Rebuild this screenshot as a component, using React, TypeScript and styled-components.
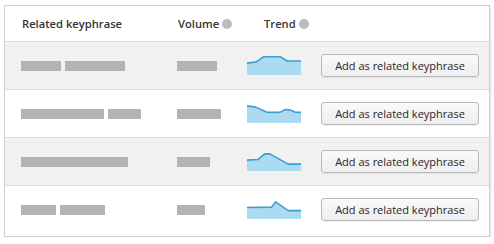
import React from 'react';
import styled, { createGlobalStyle } from 'styled-components';

const GlobalStyle = createGlobalStyle`
  body {
    margin: 0;
    background: #ffffff;
    font-family: 'Open Sans', 'Noto Sans', sans-serif;
  }
`;

const Card = styled.div`
  margin: 5px 0 0 4px;
  width: 486px;
  box-sizing: border-box;
  border: 1px solid #cfcfcf;
  box-shadow: 1px 1px 2px rgba(0, 0, 0, 0.12);
  background: #fff;
  padding-bottom: 3px;
`;

const Row = styled.div<{ shaded?: boolean; last?: boolean }>`
  display: grid;
  grid-template-columns: 156px 70px 74px 158px;
  align-items: center;
  padding-left: 16px;
  height: 47px;
  background: ${({ shaded }) => (shaded ? '#f1f1f1' : '#fff')};
  border-bottom: ${({ last }) => (last ? 'none' : '1px solid #dcdcdc')};
`;

const HeaderRow = styled(Row)`
  height: 35px;
`;

const HeaderCell = styled.div<{ indent?: number }>`
  display: flex;
  align-items: center;
  gap: 3px;
  font-size: 11.2px;
  font-weight: 600;
  color: #333;
  padding-left: ${({ indent }) => indent ?? 1}px;
`;

const HelpDot = styled.span`
  display: inline-block;
  width: 10px;
  height: 10px;
  border-radius: 50%;
  background: #bcbcbc;
`;

const Bars = styled.div`
  display: flex;
  gap: 4px;
`;

const Bar = styled.span<{ w: number }>`
  display: block;
  width: ${({ w }) => w}px;
  height: 10px;
  background: #b3b3b3;
`;

const Spark = styled.svg`
  display: block;
  width: 54px;
  height: 19px;
`;

const AddButton = styled.button`
  width: 158px;
  height: 23px;
  box-sizing: border-box;
  border: 1px solid #b9b9b9;
  border-radius: 3px;
  background: linear-gradient(#f9f9f9, #efefef);
  box-shadow: 0 1px 0 rgba(0, 0, 0, 0.05);
  font-family: 'Open Sans', 'Noto Sans', sans-serif;
  font-size: 11px;
  color: #262626;
  padding: 0;
  cursor: pointer;
`;

interface Item {
  words: number[];
  volume: number;
  trend: string;
}

const items: Item[] = [
  { words: [40, 60], volume: 40, trend: '22,57 50,53 72,36 120,36 142,50 183,50' },
  { words: [83, 33], volume: 44, trend: '22,40 48,44 80,60 120,61 135,52 150,53 165,60 183,61' },
  { words: [107], volume: 33, trend: '22,60 55,58 75,40 90,40 145,73 183,73' },
  { words: [35, 45], volume: 28, trend: '22,58 95,57 107,40 145,68 183,68' },
];

const Sparkline: React.FC<{ points: string }> = ({ points }) => (
  <Spark viewBox="22 34 161 61" preserveAspectRatio="none">
    <polygon points={`22,95 ${points} 183,95`} fill="#acdaf1" />
    <polyline
      points={points}
      fill="none"
      stroke="#3d9dd3"
      strokeWidth={1.6}
      vectorEffect="non-scaling-stroke"
      strokeLinejoin="round"
    />
  </Spark>
);

const App: React.FC = () => (
  <>
    <GlobalStyle />
    <Card>
      <HeaderRow>
        <HeaderCell>Related keyphrase</HeaderCell>
        <HeaderCell>
          Volume <HelpDot />
        </HeaderCell>
        <HeaderCell indent={17}>
          Trend <HelpDot />
        </HeaderCell>
        <div />
      </HeaderRow>
      {items.map((item, i) => (
        <Row key={i} shaded={i % 2 === 0} last={i === items.length - 1}>
          <Bars>
            {item.words.map((w, j) => (
              <Bar key={j} w={w} />
            ))}
          </Bars>
          <Bars>
            <Bar w={item.volume} />
          </Bars>
          <Sparkline points={item.trend} />
          <AddButton>Add as related keyphrase</AddButton>
        </Row>
      ))}
    </Card>
  </>
);

export default App;
